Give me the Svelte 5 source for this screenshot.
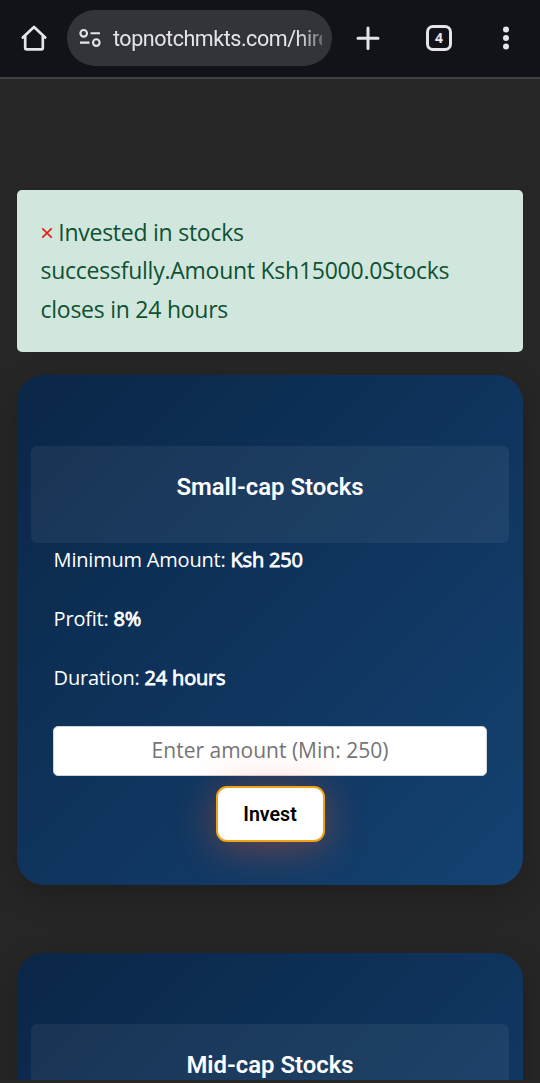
<script lang="ts">
  interface Plan {
    name: string;
    details?: { min: number; profit: number; hours: number };
  }

  const plans: Plan[] = [
    { name: 'Small-cap Stocks', details: { min: 250, profit: 8, hours: 24 } },
    { name: 'Mid-cap Stocks' }
  ];

  let showAlert = $state(true);
</script>

<div class="screen">
  <header class="browser-bar">
    <svg class="home" viewBox="0 0 28 28" width="28" height="28" fill="none" stroke="currentColor" stroke-width="2.7" stroke-linecap="round" stroke-linejoin="round">
      <path d="M2.8 13.6L14 3l11.2 10.6M5.2 11.6V24a1.4 1.4 0 0 0 1.4 1.4h14.8a1.4 1.4 0 0 0 1.4-1.4V11.6"></path>
    </svg>

    <div class="address">
      <svg viewBox="0 0 22 20" width="22" height="20" fill="none" stroke="currentColor" stroke-width="2.1">
        <circle cx="4.7" cy="5.3" r="3.3"></circle>
        <path d="M11.5 5.3H21M1 14.6h9.5"></path>
        <circle cx="17.3" cy="14.6" r="3.3"></circle>
      </svg>
      <span class="url">topnotchmkts.com/hire</span>
    </div>

    <svg class="plus" viewBox="0 0 24 24" width="24" height="24" fill="none" stroke="currentColor" stroke-width="3" stroke-linecap="round">
      <path d="M12 2v20.4M2 12.2h20"></path>
    </svg>

    <span class="tabs">4</span>

    <svg class="more" viewBox="0 0 8 26" width="8" height="26" fill="currentColor">
      <circle cx="4" cy="4.5" r="3"></circle>
      <circle cx="4" cy="13" r="3"></circle>
      <circle cx="4" cy="21.5" r="3"></circle>
    </svg>
  </header>

  <main>
    {#if showAlert}
      <div class="alert">
        <button type="button" class="close" aria-label="Close" onclick={() => (showAlert = false)}>
          <svg viewBox="0 0 12 12" width="12" height="12" stroke="currentColor" stroke-width="1.7">
            <path d="M1.3 1.3l9.4 9.4M10.7 1.3l-9.4 9.4"></path>
          </svg>
        </button>
        Invested in stocks successfully.Amount Ksh15000.0Stocks closes in 24 hours
      </div>
    {/if}

    {#each plans as plan}
      <section class="card">
        <h4 class="card-title">{plan.name}</h4>
        {#if plan.details}
          <div class="card-body">
            <p>Minimum Amount: <b>Ksh {plan.details.min}</b></p>
            <p>Profit: <b>{plan.details.profit}%</b></p>
            <p>Duration: <b>{plan.details.hours} hours</b></p>
            <input type="text" placeholder="Enter amount (Min: {plan.details.min})" />
            <button type="button" class="invest">Invest</button>
          </div>
        {/if}
      </section>
    {/each}
  </main>
  <div class="nav-edge"></div>
</div>

<style>
  :global(body) {
    background: #262626;
  }

  .screen {
    display: flex;
    flex-direction: column;
    height: 1083px;
    overflow: hidden;
    background: #262626;
    font-family: 'Open Sans', 'Noto Sans', sans-serif;
  }

  .browser-bar {
    display: flex;
    align-items: center;
    flex: none;
    box-sizing: border-box;
    height: 79px;
    padding: 0 30px 2px 20px;
    border-bottom: 2px solid #414246;
    background: #121318;
    color: #e4e4ea;
  }

  .address {
    display: flex;
    align-items: center;
    box-sizing: border-box;
    width: 265px;
    height: 56px;
    margin-left: 19px;
    padding: 0 10px 0 12px;
    border-radius: 28px;
    background: #33343a;
  }

  .address svg {
    flex: none;
  }

  .url {
    flex: 1;
    margin-left: 12px;
    padding-top: 2px;
    overflow: hidden;
    font-family: Roboto, sans-serif;
    font-size: 21.5px;
    line-height: 30px;
    letter-spacing: -0.45px;
    white-space: nowrap;
    -webkit-mask-image: linear-gradient(to right, #000 88%, rgba(0, 0, 0, 0.35));
    mask-image: linear-gradient(to right, #000 88%, rgba(0, 0, 0, 0.35));
  }

  .plus {
    margin-left: 24px;
  }

  .tabs {
    box-sizing: border-box;
    width: 26px;
    height: 26px;
    margin-left: 46px;
    border: 3px solid currentColor;
    border-radius: 7px;
    font: 700 14px/20px 'Open Sans', sans-serif;
    text-align: center;
  }

  .more {
    margin-left: auto;
  }

  main {
    flex: 1;
    min-height: 0;
    padding: 111px 17px 0;
    overflow: hidden;
  }

  .alert {
    box-sizing: border-box;
    height: 162px;
    margin-bottom: 23px;
    padding: 23px 64px 23px 23.5px;
    border-radius: 5px;
    background: #d1e7dd;
    color: #0f5132;
    font-size: 23px;
    line-height: 38.4px;
    letter-spacing: -0.25px;
  }

  .close {
    padding: 0;
    border: 0;
    background: none;
    color: #e0201c;
    line-height: 0;
    vertical-align: 2px;
  }

  .close svg {
    display: block;
  }

  .card {
    box-sizing: border-box;
    height: 510px;
    margin-bottom: 68px;
    padding: 71px 14px 0;
    border-radius: 27px;
    background: linear-gradient(135deg, #0a2647, #144272);
    box-shadow: 0 10px 30px rgba(0, 0, 0, 0.2);
    color: #fff;
  }

  .card-title {
    box-sizing: border-box;
    height: 97px;
    margin: 0;
    padding-top: 25px;
    border-radius: 6px;
    background: rgba(255, 255, 255, 0.06);
    font: 600 23.9px/33px Roboto, sans-serif;
    text-align: center;
  }

  .card-body {
    display: flex;
    flex-direction: column;
    padding: 0 22px;
  }

  p {
    margin: 0 0 25px;
    padding-left: 0.6px;
    font-size: 20px;
    line-height: 34px;
    letter-spacing: -0.2px;
  }

  b {
    font-weight: 400;
    -webkit-text-stroke: 0.8px currentColor;
  }

  input {
    box-sizing: border-box;
    width: 100%;
    height: 50px;
    margin-top: 6px;
    padding: 0 10px 2px;
    border: 1px solid #ced4da;
    border-radius: 5px;
    background: #fff;
    font: 21px/30px 'Open Sans', 'Noto Sans', sans-serif;
    text-align: center;
  }

  input::placeholder {
    color: #757575;
    opacity: 1;
  }

  .invest {
    align-self: center;
    width: 109px;
    height: 56px;
    margin-top: 10px;
    padding: 1px 0 0;
    border: 2.5px solid #f0a317;
    border-radius: 11px;
    background: #fff;
    box-shadow: 0 5px 40px rgba(255, 87, 34, 0.4);
    color: #000;
    font: 600 19.6px/24px Roboto, sans-serif;
  }

  .nav-edge {
    flex: none;
    height: 3px;
    background: #262626;
  }
</style>
